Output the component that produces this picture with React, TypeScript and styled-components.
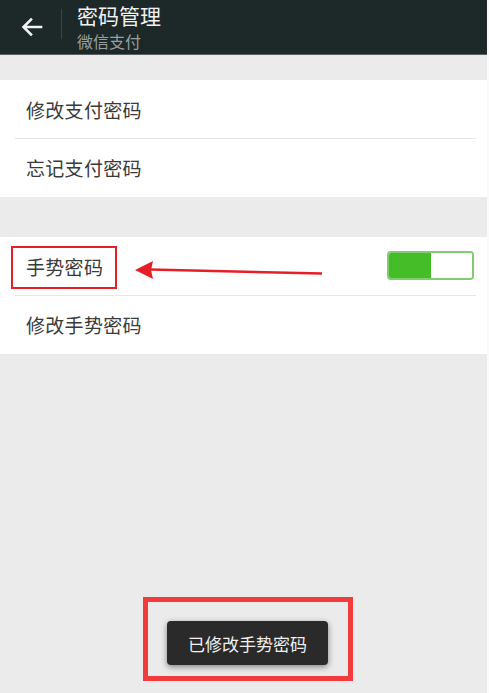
import React from 'react'
import styled, { createGlobalStyle } from 'styled-components'

const GlobalStyle = createGlobalStyle`
  html, body {
    margin: 0;
    padding: 0;
    background: #ebebeb;
  }
  * {
    box-sizing: border-box;
  }
`

const Page = styled.div`
  position: relative;
  width: 489px;
  height: 693px;
  overflow: hidden;
  background: #ebebeb;
  border-right: 2px solid #fafafa;
  font-family: 'Noto Sans CJK SC', 'Noto Sans', sans-serif;
  display: flex;
  flex-direction: column;
`

const Toolbar = styled.div`
  height: 55px;
  flex-shrink: 0;
  background: #1d2828;
  border-bottom: 1px solid #5b6262;
  display: flex;
  align-items: center;
`

const BackButton = styled.div`
  width: 61px;
  height: 100%;
  display: flex;
  align-items: center;
  padding-left: 21px;
`

const Divider = styled.div`
  width: 1px;
  height: 30px;
  background: #3a4545;
  margin-top: -6px;
`

const Titles = styled.div`
  align-self: flex-start;
  display: flex;
  flex-direction: column;
  padding-left: 15px;
`

const Title = styled.div`
  color: #f2f2f2;
  font-size: 21px;
  line-height: normal;
`

const Subtitle = styled.div`
  color: #9a9f9f;
  font-size: 16px;
  line-height: normal;
  margin-top: -1px;
`

const Gap = styled.div<{ h: number }>`
  height: ${(p) => p.h}px;
  flex-shrink: 0;
`

const Group = styled.div`
  background: #ffffff;
  flex-shrink: 0;
`

const Row = styled.div<{ divider?: boolean }>`
  position: relative;
  height: 58.5px;
  display: flex;
  align-items: center;
  justify-content: space-between;
  padding: 0 13px 0 26px;
  color: #3a3a3a;
  font-size: 19px;
  ${(p) =>
    p.divider &&
    `
    &::after {
      content: '';
      position: absolute;
      left: 15px;
      right: 11px;
      bottom: 0;
      height: 1px;
      background: #e6e6e6;
    }
  `}
`

const Label = styled.span`
  letter-spacing: 0.3px;
`

const Switch = styled.div`
  width: 87px;
  height: 29px;
  border: 2px solid #7fcd6f;
  border-radius: 4px;
  display: flex;
  overflow: hidden;
  margin-top: -2px;
`

const SwitchOn = styled.div`
  width: 42px;
  background: #45bd28;
`

const SwitchOff = styled.div`
  flex: 1;
  background: #ffffff;
`

const Highlight = styled.div`
  position: absolute;
  left: 11px;
  top: 246px;
  width: 106px;
  height: 43px;
  border: 2px solid #e51f25;
`

const Arrow = styled.svg`
  position: absolute;
  left: 132px;
  top: 259px;
`

const Toast = styled.div`
  position: absolute;
  left: 167px;
  top: 621px;
  width: 161px;
  height: 44px;
  background: #2a2a2a;
  border-radius: 4px;
  box-shadow: 0 2px 6px rgba(0, 0, 0, 0.45);
  color: #f0f0f0;
  font-size: 17px;
  display: flex;
  align-items: center;
  justify-content: center;
`

const ToastFrame = styled.div`
  position: absolute;
  left: 143px;
  top: 597px;
  width: 210px;
  height: 84px;
  border: 5px solid #f33a3d;
`

export default function App() {
  return (
    <>
      <GlobalStyle />
      <Page>
        <Toolbar>
          <BackButton>
            <svg width="22" height="20" viewBox="0 0 22 20" fill="none">
              <path
                d="M20 10H3M10 2.5L2.5 10L10 17.5"
                stroke="#f2f2f2"
                strokeWidth="2.6"
                strokeLinecap="square"
              />
            </svg>
          </BackButton>
          <Divider />
          <Titles>
            <Title>密码管理</Title>
            <Subtitle>微信支付</Subtitle>
          </Titles>
        </Toolbar>
        <Gap h={25} />
        <Group>
          <Row divider>
            <Label>修改支付密码</Label>
          </Row>
          <Row>
            <Label>忘记支付密码</Label>
          </Row>
        </Group>
        <Gap h={40} />
        <Group>
          <Row divider>
            <Label>手势密码</Label>
            <Switch>
              <SwitchOn />
              <SwitchOff />
            </Switch>
          </Row>
          <Row>
            <Label>修改手势密码</Label>
          </Row>
        </Group>

        <Highlight />
        <Arrow width="192" height="24" viewBox="0 0 192 24">
          <path d="M18 10.5 L190 14.5" stroke="#e51f25" strokeWidth="2.5" />
          <path d="M3 11 L21 2 L19 11 L21 20 Z" fill="#e51f25" />
        </Arrow>

        <ToastFrame />
        <Toast>已修改手势密码</Toast>
      </Page>
    </>
  )
}
